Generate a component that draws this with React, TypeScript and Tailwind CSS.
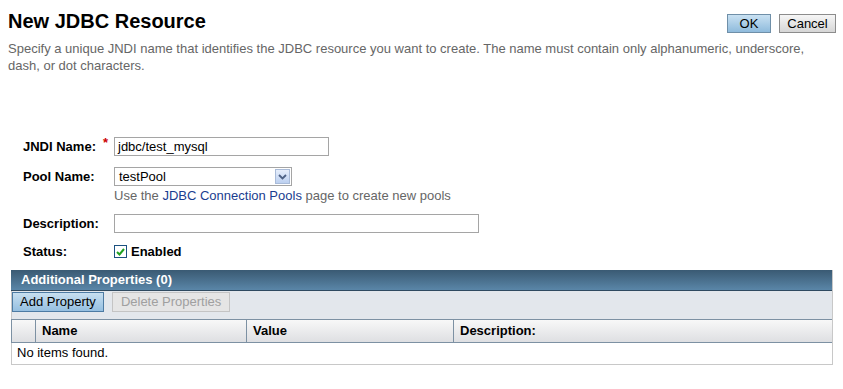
export default function App() {
  return (
    <div className="relative w-[843px] h-[389px] bg-white text-[13px] text-black font-['Liberation_Sans',Arial,sans-serif]">
      <div className="flex justify-between pl-[8px] pr-[7px] pt-[10px]">
        <h1 className="text-[20px] leading-[22px] font-bold">New JDBC Resource</h1>
        <div className="flex gap-[8px] pt-[4px]">
          <button className="w-[44px] h-[19px] border border-[#6f8fa8] bg-gradient-to-b from-[#c9e1f2] to-[#8fbbdc] leading-[17px]">
            OK
          </button>
          <button className="w-[57px] h-[19px] border border-[#8c8c8c] bg-gradient-to-b from-[#f6f6f6] to-[#d6d6d6] leading-[17px]">
            Cancel
          </button>
        </div>
      </div>
      <p className="pl-[8px] pr-[20px] mt-[7px] text-[#666] leading-[17px]">
        Specify a unique JNDI name that identifies the JDBC resource you want to create. The name must contain only alphanumeric, underscore, dash, or dot characters.
      </p>

      <div className="mt-[63px] pl-[23px]">
        <div className="flex items-center h-[19px]">
          <label className="w-[91px] font-bold relative">
            JNDI Name:
            <span className="absolute left-[80px] -top-[4px] text-[#cc0000] font-bold">*</span>
          </label>
          <div className="w-[215px] h-[19px] border border-[#a5a5a5] px-[3px] leading-[17px]">jdbc/test_mysql</div>
        </div>

        <div className="flex items-start mt-[11px]">
          <label className="w-[91px] font-bold leading-[19px]">Pool Name:</label>
          <div>
            <div className="flex items-center w-[178px] h-[19px] border border-[#a5a5a5] pl-[4px]">
              <span className="flex-1 leading-[17px]">testPool</span>
              <span className="w-[15px] h-[15px] mr-[1px] border border-[#a9bbd8] bg-gradient-to-b from-[#e6eefb] to-[#bcd0f0] flex items-center justify-center">
                <svg width="9" height="6" viewBox="0 0 9 6">
                  <path d="M1 1 L4.5 4.5 L8 1" stroke="#4d6185" strokeWidth="1.8" fill="none" />
                </svg>
              </span>
            </div>
            <div className="mt-[2px] text-[#666] leading-[16px]">
              Use the <span className="text-[#1a3d8f]">JDBC Connection Pools</span> page to create new pools
            </div>
          </div>
        </div>

        <div className="flex items-center mt-[10px]">
          <label className="w-[91px] font-bold">Description:</label>
          <div className="w-[365px] h-[19px] border border-[#a5a5a5]" />
        </div>

        <div className="flex items-center mt-[9px] h-[18px]">
          <label className="w-[91px] font-bold">Status:</label>
          <span className="w-[13px] h-[13px] border border-[#1c5180] bg-white flex items-center justify-center mr-[4px]">
            <svg width="9" height="8" viewBox="0 0 9 8">
              <path d="M1 4 L3.5 6.5 L8 1" stroke="#21a121" strokeWidth="2" fill="none" />
            </svg>
          </span>
          <span className="font-bold">Enabled</span>
        </div>
      </div>

      <div className="mt-[9px] mx-[11px] w-[822px] border-r border-b border-[#c8c8c8]">
        <div className="h-[21px] bg-gradient-to-b from-[#3a5a73] to-[#5a86a8] border-b border-[#2f4a60] text-white font-bold leading-[20px] pl-[10px]">
          Additional Properties (0)
        </div>
        <div className="h-[28px] bg-[#e3e7ec] flex items-start gap-[8px] pt-[1px] border-l border-[#c8c8c8]">
          <button className="h-[20px] px-[7px] border border-[#4d7ba3] bg-gradient-to-b from-[#c7dff0] to-[#95bfe0] leading-[18px]">
            Add Property
          </button>
          <button className="h-[20px] px-[8px] border border-[#c4c4c4] bg-[#e5e5e5] text-[#a0a0a0] leading-[18px]">
            Delete Properties
          </button>
        </div>
        <div className="flex h-[24px] border-t border-b border-[#7d91a3] bg-gradient-to-b from-[#f8f8f8] to-[#dedfe2] font-bold leading-[22px] border-l border-l-[#7d91a3]">
          <div className="w-[24px] border-r border-[#7d91a3]" />
          <div className="w-[211px] border-r border-[#7d91a3] pl-[6px]">Name</div>
          <div className="w-[207px] border-r border-[#7d91a3] pl-[6px]">Value</div>
          <div className="flex-1 pl-[6px]">Description:</div>
        </div>
        <div className="h-[21px] leading-[20px] pl-[5px] border-l border-[#c8c8c8]">No items found.</div>
      </div>
    </div>
  );
}
